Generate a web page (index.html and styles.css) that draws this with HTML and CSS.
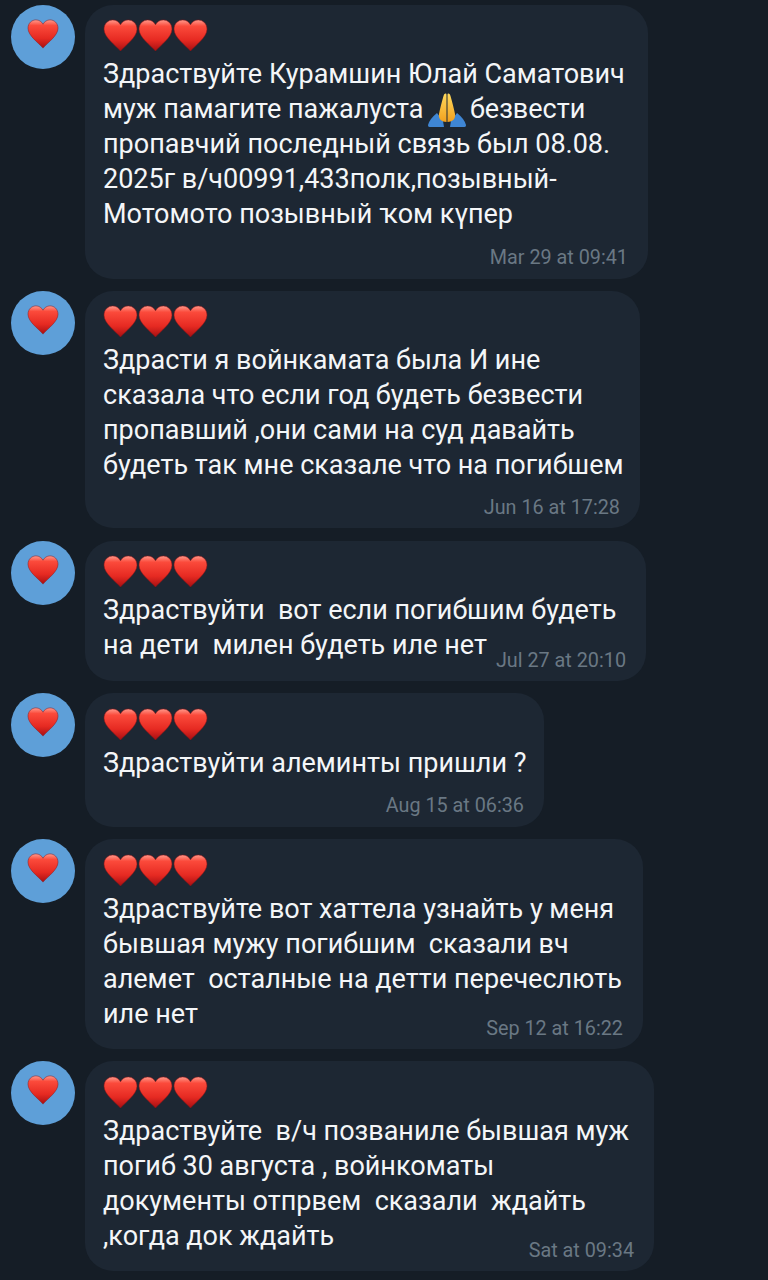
FILE: index.html
```html
<!DOCTYPE html>
<html lang="ru">
<head>
<meta charset="utf-8">
<title>Messages</title>
<link rel="stylesheet" href="styles.css">
</head>
<body>
<svg class="defs" width="0" height="0" aria-hidden="true">
  <defs>
    <linearGradient id="heartFill" x1="0" y1="0" x2="0" y2="1">
      <stop offset="0" stop-color="#ff9a8c"/>
      <stop offset="0.2" stop-color="#fb4a3b"/>
      <stop offset="0.65" stop-color="#e62a22"/>
      <stop offset="1" stop-color="#a80f12"/>
    </linearGradient>
    <linearGradient id="handFill" x1="0" y1="0" x2="0" y2="1">
      <stop offset="0" stop-color="#ffd95c"/>
      <stop offset="1" stop-color="#f2a01e"/>
    </linearGradient>
    <symbol id="heart" viewBox="0 0 36 34">
      <path d="M18 33C13 27 1 19 1 10.500C1 4.500 5.500 1 10 1C13.500 1 16.500 3 18 6C19.500 3 22.500 1 26 1C30.500 1 35 4.500 35 10.500C35 19 23 27 18 33Z" fill="url(#heartFill)" stroke="#8f1416" stroke-opacity="0.7" stroke-width="0.8"/>
    </symbol>
  </defs>
</svg>
<main class="feed">
  <article class="row">
    <div class="avatar"><svg class="avatar-heart"><use href="#heart"/></svg></div>
    <div class="bubble b1">
      <div class="hearts"><svg class="heart"><use href="#heart"/></svg><svg class="heart"><use href="#heart"/></svg><svg class="heart"><use href="#heart"/></svg></div>
      <p class="text">Здраствуйте Курамшин Юлай Саматович<br>муж памагите пажалуста <svg class="pray" viewBox="0 0 38 34" aria-hidden="true"><path d="M0 32C1 28 4 24 9 20L15 28L16 34H3C1 34 0 34 0 32ZM38 32C37 28 34 24 29 20L23 28L22 34H35C37 34 38 34 38 32Z" fill="#3f86d4"/><path d="M18.500 29C14 29 10 26 11 21C12 16 14 8 15.500 3C16.500 0 18.500 0 18.500 2ZM19.500 29C24 29 28 26 27 21C26 16 24 8 22.500 3C21.500 0 19.500 0 19.500 2Z" fill="url(#handFill)"/></svg> безвести<br>пропавчий последный связь был 08.08.<br>2025г в/ч00991,433полк,позывный-<br>Мотомото позывный ҡом күпер</p>
      <div class="meta">Mar 29 at 09:41</div>
    </div>
  </article>
  <article class="row">
    <div class="avatar"><svg class="avatar-heart"><use href="#heart"/></svg></div>
    <div class="bubble b2">
      <div class="hearts"><svg class="heart"><use href="#heart"/></svg><svg class="heart"><use href="#heart"/></svg><svg class="heart"><use href="#heart"/></svg></div>
      <p class="text">Здрасти я войнкамата была И ине<br>сказала что если год будеть безвести<br>пропавший ,они сами на суд давайть<br>будеть так мне сказале что на погибшем</p>
      <div class="meta">Jun 16 at 17:28</div>
    </div>
  </article>
  <article class="row">
    <div class="avatar"><svg class="avatar-heart"><use href="#heart"/></svg></div>
    <div class="bubble b3">
      <div class="hearts"><svg class="heart"><use href="#heart"/></svg><svg class="heart"><use href="#heart"/></svg><svg class="heart"><use href="#heart"/></svg></div>
      <p class="text">Здраствуйти  вот если погибшим будеть<br>на дети  милен будеть иле нет</p>
      <div class="meta tucked">Jul 27 at 20:10</div>
    </div>
  </article>
  <article class="row">
    <div class="avatar"><svg class="avatar-heart"><use href="#heart"/></svg></div>
    <div class="bubble b4">
      <div class="hearts"><svg class="heart"><use href="#heart"/></svg><svg class="heart"><use href="#heart"/></svg><svg class="heart"><use href="#heart"/></svg></div>
      <p class="text">Здраствуйти алеминты пришли ?</p>
      <div class="meta">Aug 15 at 06:36</div>
    </div>
  </article>
  <article class="row">
    <div class="avatar"><svg class="avatar-heart"><use href="#heart"/></svg></div>
    <div class="bubble b5">
      <div class="hearts"><svg class="heart"><use href="#heart"/></svg><svg class="heart"><use href="#heart"/></svg><svg class="heart"><use href="#heart"/></svg></div>
      <p class="text">Здраствуйте вот хаттела узнайть у меня<br>бывшая мужу погибшим  сказали вч<br>алемет  осталные на детти перечеслють<br>иле нет</p>
      <div class="meta tucked">Sep 12 at 16:22</div>
    </div>
  </article>
  <article class="row">
    <div class="avatar"><svg class="avatar-heart"><use href="#heart"/></svg></div>
    <div class="bubble b6">
      <div class="hearts"><svg class="heart"><use href="#heart"/></svg><svg class="heart"><use href="#heart"/></svg><svg class="heart"><use href="#heart"/></svg></div>
      <p class="text">Здраствуйте  в/ч позваниле бывшая муж<br>погиб 30 августа , войнкоматы<br>документы отпрвем  сказали  ждайть<br>,когда док ждайть</p>
      <div class="meta tucked">Sat at 09:34</div>
    </div>
  </article>
</main>
</body>
</html>
```
FILE: styles.css
```css
html, body {
  margin: 0;
  padding: 0;
  height: 1280px;
  overflow: hidden;
  background: #151d26;
}

.defs {
  display: block;
  height: 0;
}

.feed {
  display: flex;
  flex-direction: column;
  gap: 12.500px;
  padding: 5px 0 0 11px;
  font-family: Roboto, "Noto Sans", sans-serif;
}

.row {
  display: flex;
  align-items: flex-start;
  gap: 10px;
}

.avatar {
  flex: none;
  width: 64px;
  height: 64px;
  border-radius: 50%;
  background: #5e9fd8;
  display: flex;
  justify-content: center;
  padding-top: 14px;
  box-sizing: border-box;
}

.avatar-heart {
  width: 32px;
  height: 30px;
}

.bubble {
  box-sizing: border-box;
  display: flex;
  flex-direction: column;
  padding: 14px 20px 9px 18px;
  border-radius: 28px;
  background: #1d2733;
}

.b1 { width: 563px; height: 273.500px; }
.b2 { width: 555px; height: 237px; padding-bottom: 8px; }
.b3 { width: 561px; height: 140px; }
.b4 { width: 459px; height: 133.500px; padding-top: 15px; }
.b5 { width: 558px; height: 209.500px; padding-top: 15px; }
.b6 { width: 569px; height: 210px; padding-top: 15px; }

.hearts {
  display: flex;
  flex: none;
  height: 35px;
}

.heart {
  width: 35px;
  height: 33px;
}

.text {
  margin: 3px 0 0;
  color: #f4f6f8;
  font-size: 27px;
  line-height: 35px;
  white-space: pre;
}

.pray {
  width: 38px;
  height: 34px;
  margin: -8px -3px -8px -2px;
  vertical-align: -1px;
}

.meta {
  margin-top: auto;
  color: #6a7884;
  font-size: 19.800px;
  line-height: 24px;
  text-align: right;
}

.meta.tucked {
  margin-top: -15px;
}

.b3 .meta.tucked {
  margin-top: -14px;
}
```
